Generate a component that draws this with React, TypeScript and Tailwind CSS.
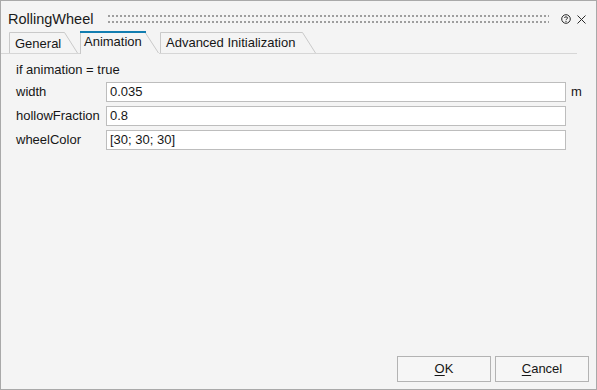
import React from "react";

function Grip() {
  const dots: React.ReactNode[] = [];
  for (let i = 0; i < 111; i++) {
    dots.push(<rect key={"a" + i} x={i * 4 + 1} y={0} width={2} height={2} fill="#9e9e9e" />);
    dots.push(<rect key={"b" + i} x={i * 4 + 1} y={6} width={2} height={2} fill="#9e9e9e" />);
  }
  return (
    <svg width="442" height="8" className="block mt-[14px]">
      {dots}
    </svg>
  );
}

function HelpIcon() {
  return (
    <svg width="10" height="10" viewBox="0 0 10 10" className="block mt-[13px] ml-[12px]">
      <circle cx="5" cy="5" r="4.3" fill="none" stroke="#2a2a2a" strokeWidth="1" />
      <path d="M3.4 3.9 C3.4 2.5 6.6 2.5 6.6 3.9 C6.6 5 5 4.9 5 6.2" fill="none" stroke="#2a2a2a" strokeWidth="1" />
      <rect x="4.5" y="7" width="1" height="1" fill="#2a2a2a" />
    </svg>
  );
}

function CloseIcon() {
  return (
    <svg width="9" height="9" viewBox="0 0 9 9" className="block mt-[14px] ml-[6px]">
      <path d="M0.5 0.5 L8.5 8.5 M8.5 0.5 L0.5 8.5" stroke="#2a2a2a" strokeWidth="1" />
    </svg>
  );
}

function Tab({
  label,
  width,
  topRight,
  active,
  className,
}: {
  label: string;
  width: number;
  topRight: number;
  active?: boolean;
  className?: string;
}) {
  const h = active ? 23 : 21;
  return (
    <div
      className={
        "relative shrink-0 text-[13px] leading-[16px] " +
        (active ? "h-[23px] -mb-px pt-[3px] pl-[4px] bg-[#f4f4f4] " : "h-[21px] pl-[6px] ") +
        (className ?? "")
      }
      style={{ width }}
    >
      <svg width={width} height={h} className="absolute inset-0 block">
        {active ? (
          <>
            <path d={`M0.5 ${h} L0.5 1.5`} stroke="#c9c9c9" fill="none" />
            <rect x="0" y="0" width={topRight + 1} height="2" fill="#127db0" />
            <path d={`M${topRight + 0.5} 2 L${width - 0.5} ${h - 1}`} stroke="#c9c9c9" fill="none" />
          </>
        ) : (
          <path
            d={`M0.5 ${h} L0.5 0.5 L${topRight + 0.5} 0.5 L${width - 0.5} ${h}`}
            stroke="#c9c9c9"
            fill="none"
          />
        )}
      </svg>
      <span className="relative">{label}</span>
    </div>
  );
}

function Row({ label, value, unit }: { label: string; value: string; unit?: string }) {
  return (
    <div className="flex items-center h-[20px]">
      <div className="w-[90px] shrink-0 text-[13px] leading-[16px]">{label}</div>
      <div className="w-[460px] h-[20px] border border-[#bdbdbd] bg-white pl-[3px] text-[13px] leading-[18px]">
        {value}
      </div>
      {unit && <div className="ml-[5px] text-[13px] leading-[16px]">{unit}</div>}
    </div>
  );
}

export default function App() {
  return (
    <div className="w-[597px] h-[390px] border border-[#a9a9a9] bg-[#f4f4f4] flex flex-col text-[#161616] font-['Liberation_Sans',Arial,sans-serif]">
      {/* Title bar */}
      <div className="flex items-start h-[30px] pl-[7px]">
        <div className="w-[99px] pt-[9px] text-[14.5px] leading-[18px] text-[#1a1a1a]">RollingWheel</div>
        <Grip />
        <HelpIcon />
        <CloseIcon />
      </div>

      {/* Tabs */}
      <div className="flex items-end h-[23px] w-[576px] border-b border-[#d6d6d6]">
        <Tab label="General" width={69} topRight={55} className="ml-[8px] pt-[4px]" />
        <Tab label="Animation" width={79} topRight={65} active className="ml-[2px]" />
        <Tab label="Advanced Initialization" width={156} topRight={142} className="ml-[1px] pt-[3px]" />
      </div>

      {/* Content */}
      <div className="flex-1 flex flex-col pl-[15px] pt-[8px]">
        <div className="text-[13px] leading-[16px]">if animation = true</div>
        <div className="flex flex-col gap-[4px] mt-[4px]">
          <Row label="width" value="0.035" unit="m" />
          <Row label="hollowFraction" value="0.8" />
          <Row label="wheelColor" value="[30; 30; 30]" />
        </div>
      </div>

      {/* Buttons */}
      <div className="flex justify-end gap-[4px] pr-[7px] pb-[7px]">
        <button className="w-[94px] h-[26px] border border-[#b3b3b3] bg-[#f6f6f6] text-[13px] leading-[16px] text-[#161616]">
          <span className="underline underline-offset-2">O</span>K
        </button>
        <button className="w-[94px] h-[26px] border border-[#b3b3b3] bg-[#f6f6f6] text-[13px] leading-[16px] text-[#161616]">
          <span className="underline underline-offset-2">C</span>ancel
        </button>
      </div>
    </div>
  );
}
